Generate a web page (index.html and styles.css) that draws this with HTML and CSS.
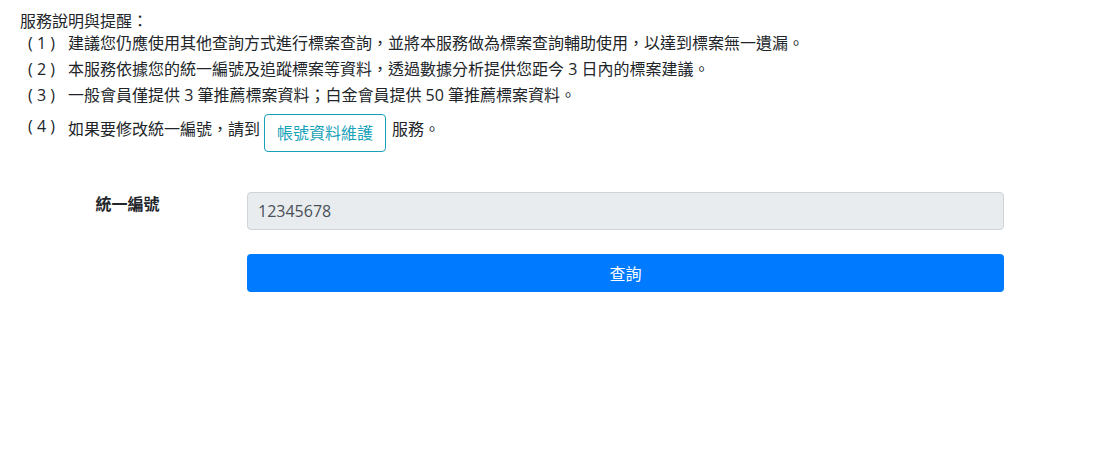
FILE: index.html
```html
<!DOCTYPE html>
<html lang="zh-Hant">
<head>
<meta charset="utf-8">
<title>標案建議查詢</title>
<link rel="stylesheet" href="styles.css">
</head>
<body>
<div class="page">
  <section class="notice">
    <div class="notice-title">服務說明與提醒：</div>
    <ol class="notes">
      <li class="note"><span class="num">( 1 )</span><span class="txt">建議您仍應使用其他查詢方式進行標案查詢，並將本服務做為標案查詢輔助使用，以達到標案無一遺漏。</span></li>
      <li class="note"><span class="num">( 2 )</span><span class="txt">本服務依據您的統一編號及追蹤標案等資料，透過數據分析提供您距今 3 日內的標案建議。</span></li>
      <li class="note"><span class="num">( 3 )</span><span class="txt">一般會員僅提供 3 筆推薦標案資料；白金會員提供 50 筆推薦標案資料。</span></li>
      <li class="note note-last"><span class="num">( 4 )</span><span class="txt txt-flex"><span class="txt-part">如果要修改統一編號，請到</span><a class="btn-outline" href="#">帳號資料維護</a><span class="txt-part">服務。</span></span></li>
    </ol>
  </section>
  <form class="query-form">
    <div class="form-row">
      <label class="form-label" for="taxid">統一編號</label>
      <input class="form-input" id="taxid" type="text" value="12345678" readonly>
    </div>
    <div class="form-row form-row-btn">
      <span></span>
      <button class="btn-primary" type="button">查詢</button>
    </div>
  </form>
</div>
</body>
</html>
```
FILE: styles.css
```css
html, body {
  margin: 0;
  padding: 0;
  background: #ffffff;
}
body {
  font-family: "Open Sans", "Noto Sans CJK TC", sans-serif;
  font-size: 16px;
  line-height: 24px;
  color: #212529;
}
.page {
  padding: 9px 20px 0 20px;
}
.notice-title {
  height: 23px;
}
.notes {
  list-style: none;
  margin: -1px 0 0 0;
  padding: 0;
}
.note {
  display: flex;
  padding: 0 0 2px 0;
}
.num {
  width: 40px;
  padding-left: 8px;
  flex: none;
}
.note-last {
  align-items: flex-start;
  padding: 0;
}
.note-last .num {
  margin-top: 5px;
}
.txt-flex {
  display: flex;
  align-items: flex-start;
}
.txt-part {
  margin-top: 8px;
}
.btn-outline {
  display: inline-block;
  margin: 5px 6px 0 4px;
  padding: 6px 12px;
  border: 1px solid #17a2b8;
  border-radius: 4px;
  color: #17a2b8;
  text-decoration: none;
  line-height: 24px;
}
.query-form {
  margin-top: 40px;
}
.form-row {
  display: grid;
  grid-template-columns: 215px 757px;
  column-gap: 12px;
}
.form-row-btn {
  margin-top: 24px;
}
.form-label {
  text-align: center;
  font-weight: bold;
  line-height: 24px;
}
.form-input {
  box-sizing: border-box;
  height: 38px;
  padding: 0 10px;
  border: 1px solid #ced4da;
  border-radius: 4px;
  background: #e9ecef;
  color: #495057;
  font-family: "Open Sans", "Noto Sans CJK TC", sans-serif;
  font-size: 16px;
  outline: none;
}
.btn-primary {
  height: 38px;
  border: none;
  border-radius: 4px;
  background: #007bff;
  color: #ffffff;
  font-family: "Open Sans", "Noto Sans CJK TC", sans-serif;
  font-size: 16px;
  cursor: pointer;
}
```
